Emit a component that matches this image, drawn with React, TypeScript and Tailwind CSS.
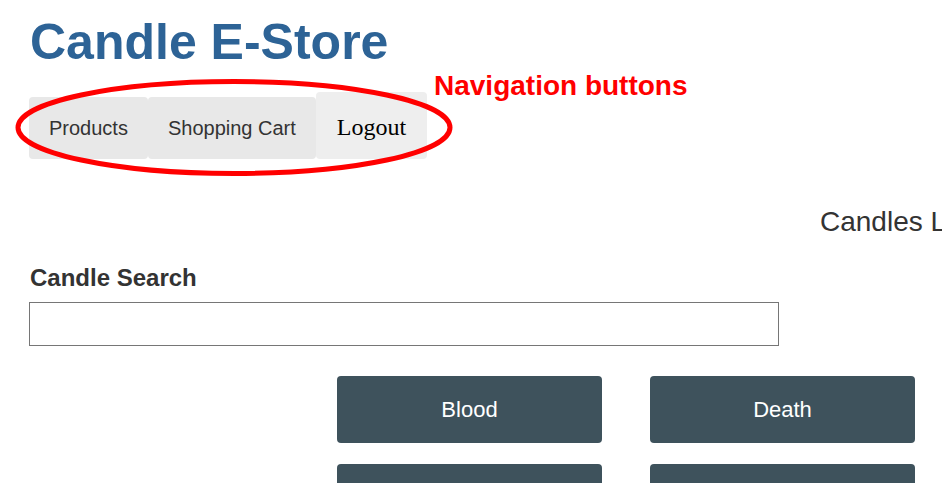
const categories = ["Blood", "Death", "Love", "Money"];

function NavButton({ label, serif }: { label: string; serif?: boolean }) {
  return (
    <button
      className={
        serif
          ? "h-[67px] px-[21px] pt-[3px] rounded-[4px] bg-[#eeeeee] text-black text-[24px] leading-none font-['Liberation_Serif',serif]"
          : "h-[62px] px-5 rounded-[4px] bg-[#e8e8e8] text-[#333333] text-[20px] leading-none"
      }
    >
      {label}
    </button>
  );
}

export default function App() {
  return (
    <div className="relative w-[942px] h-[483px] overflow-hidden bg-white font-['Liberation_Sans',Arial,sans-serif]">
      <div className="pt-[17px] px-[30px]">
        <h1 className="text-[50px] leading-[50px] font-bold text-[#2d6396] whitespace-nowrap">Candle E-Store</h1>

        <nav className="mt-[25px] flex items-end -ml-px">
          <NavButton label="Products" />
          <NavButton label="Shopping Cart" />
          <NavButton label="Logout" serif />
        </nav>

        <h2 className="mt-[49px] ml-[790px] w-[122px] overflow-hidden text-[28px] leading-[28px] text-[#333333] whitespace-nowrap">
          Candles List
        </h2>

        <label className="block mt-[30px] text-[24px] leading-[24px] font-bold text-[#333333] whitespace-nowrap">
          Candle Search
        </label>
        <input type="text" className="block mt-[12px] -ml-px w-[750px] h-[44px] border border-[#767676] px-2 text-[18px] outline-none" />

        <div className="mt-[30px] ml-[307px] grid grid-cols-[265px_265px] gap-x-[48px] gap-y-[21px]">
          {categories.map((c) => (
            <button key={c} className="h-[67px] rounded-[4px] bg-[#3e525c] text-white text-[22px]">
              {c}
            </button>
          ))}
        </div>
      </div>

      {/* annotation overlay */}
      <svg className="absolute left-[13px] top-[77px] pointer-events-none" width="443" height="101" viewBox="0 0 443 101">
        <ellipse cx="221" cy="50.5" rx="216" ry="46" fill="none" stroke="#ff0000" strokeWidth="5" />
      </svg>
      <div className="absolute left-[434px] top-[72px] text-[28px] leading-[28px] font-bold text-[#ff0000] whitespace-nowrap">
        Navigation buttons
      </div>
    </div>
  );
}
